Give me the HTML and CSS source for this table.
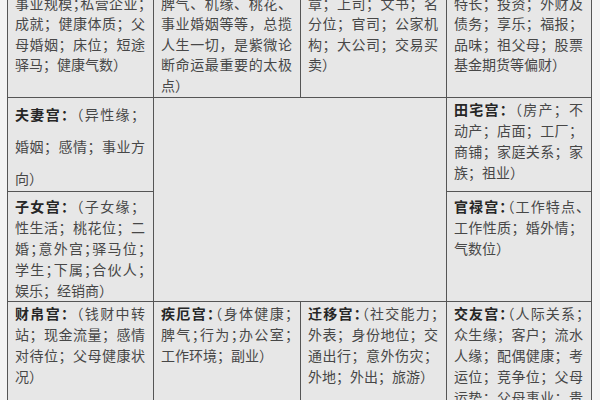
FILE: index.html
```html
<!DOCTYPE html>
<html lang="zh-CN">
<head>
<meta charset="utf-8">
<title>紫微斗数十二宫</title>
<link rel="stylesheet" href="styles.css">
</head>
<body>
<div class="page">
  <div class="board">
    <div class="cell top">
      <div class="l j"><b>兄弟宫：</b>（兄弟姐</div>
      <div class="l j">妹；母亲；朋友；同</div>
      <div class="l j t">事业规模；私营企业；</div>
      <div class="l j">成就；健康体质；父</div>
      <div class="l j">母婚姻；床位；短途</div>
      <div class="l">驿马；健康气数）</div>
    </div>
    <div class="cell top">
      <div class="l j"><b>命宫：</b>（先天命运；</div>
      <div class="l j">个性；才华；外貌；</div>
      <div class="l j">脾气、机缘、桃花、</div>
      <div class="l j">事业婚姻等等，总揽</div>
      <div class="l j">人生一切，是紫微论</div>
      <div class="l j">断命运最重要的太极</div>
      <div class="l">点）</div>
    </div>
    <div class="cell top">
      <div class="l j"><b>父母宫：</b>（父母；长</div>
      <div class="l j">辈；学业；考试；文</div>
      <div class="l j">章；上司；文书；名</div>
      <div class="l j">分位；官司；公家机</div>
      <div class="l j">构；大公司；交易买</div>
      <div class="l">卖）</div>
    </div>
    <div class="cell top">
      <div class="l j"><b>福德宫：</b>（精神；思</div>
      <div class="l j">想；兴趣；嗜好；才</div>
      <div class="l j">特长；投资；外财及</div>
      <div class="l j">债务；享乐；福报；</div>
      <div class="l j">品味；祖父母；股票</div>
      <div class="l">基金期货等偏财）</div>
    </div>

    <div class="cell wide">
      <div class="l j"><b>夫妻宫：</b>（异性缘；</div>
      <div class="l j">婚姻；感情；事业方</div>
      <div class="l">向）</div>
    </div>
    <div class="cell center"></div>
    <div class="cell">
      <div class="l j"><b>田宅宫：</b>（房产；不</div>
      <div class="l j">动产；店面；工厂；</div>
      <div class="l j">商铺；家庭关系；家</div>
      <div class="l">族；祖业）</div>
    </div>

    <div class="cell mid">
      <div class="l j"><b>子女宫：</b>（子女缘；</div>
      <div class="l j">性生活；桃花位；二</div>
      <div class="l j t">婚；意外宫；驿马位；</div>
      <div class="l j t">学生；下属；合伙人；</div>
      <div class="l">娱乐；经销商）</div>
    </div>
    <div class="cell mid">
      <div class="l j t"><b>官禄宫：</b>（工作特点、</div>
      <div class="l j">工作性质；婚外情；</div>
      <div class="l">气数位）</div>
    </div>

    <div class="cell">
      <div class="l j"><b>财帛宫：</b>（钱财中转</div>
      <div class="l j">站；现金流量；感情</div>
      <div class="l j">对待位；父母健康状</div>
      <div class="l">况）</div>
    </div>
    <div class="cell">
      <div class="l j t"><b>疾厄宫：</b>（身体健康；</div>
      <div class="l j t">脾气；行为；办公室；</div>
      <div class="l">工作环境；副业）</div>
    </div>
    <div class="cell">
      <div class="l j t"><b>迁移宫：</b>（社交能力；</div>
      <div class="l j">外表；身份地位；交</div>
      <div class="l j">通出行；意外伤灾；</div>
      <div class="l">外地；外出；旅游）</div>
    </div>
    <div class="cell">
      <div class="l j t"><b>交友宫：</b>（人际关系；</div>
      <div class="l j">众生缘；客户；流水</div>
      <div class="l j">人缘；配偶健康；考</div>
      <div class="l j">运位；竞争位；父母</div>
      <div class="l j">运势；父母事业；贵</div>
      <div class="l">人）</div>
    </div>
  </div>
</div>
</body>
</html>
```
FILE: styles.css
```css
html, body {
  margin: 0;
  padding: 0;
  background: #f3f3f3;
}

.page {
  width: 600px;
  height: 400px;
  overflow: hidden;
}

.board {
  display: grid;
  grid-template-columns: 145px 146px 145px 144px;
  grid-template-rows: 150px 93px 109px 140px;
  gap: 1px;
  width: max-content;
  background: #555555;
  border: 1px solid #555555;
  margin: -54px 0 0 7px;
  font-family: "Noto Sans CJK SC", "Noto Sans CJK JP", sans-serif;
  font-size: 14px;
  line-height: 21px;
  color: #474747;
}

.cell {
  background: #e7e7e7;
  padding: 1px 8px 0 7px;
  overflow: hidden;
}

.cell.top {
  padding-top: 4.5px;
  line-height: 20.5px;
}

.cell.mid {
  padding-top: 4px;
}

.cell.wide {
  line-height: 32px;
  padding-top: 0;
}

.cell.center {
  grid-column: 2 / 4;
  grid-row: 2 / 4;
}

.l {
  white-space: nowrap;
}

.j {
  text-align: justify;
  text-align-last: justify;
}

.t {
  font-feature-settings: "halt" 1;
}

b {
  font-weight: 700;
  color: #262626;
}
```
